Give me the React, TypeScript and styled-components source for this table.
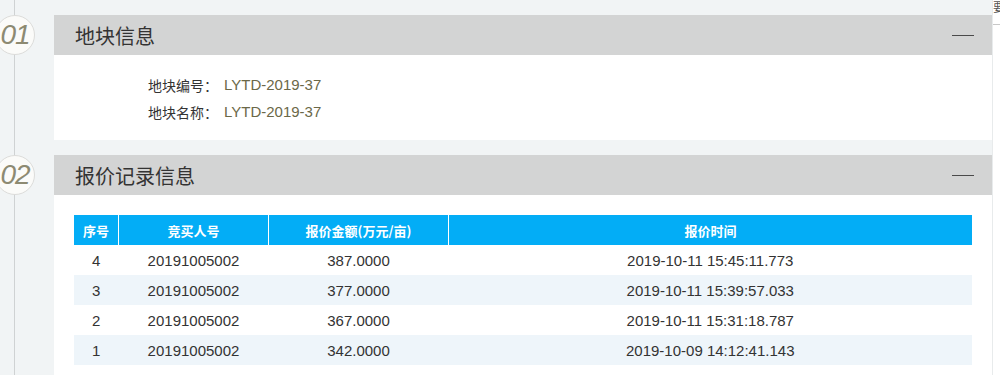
import React from "react"
import styled, { createGlobalStyle } from "styled-components"

const GlobalStyle = createGlobalStyle`
  html, body {
    margin: 0;
    padding: 0;
    background: #f1f4f5;
    font-family: "Liberation Sans", "Noto Sans CJK SC", sans-serif;
    color: #333;
  }
`

const Page = styled.div`
  display: flex;
  width: 1000px;
  height: 375px;
  overflow: hidden;
`

// Timeline line runs behind the step markers
const Main = styled.div`
  position: relative;
  flex: 1;
  padding-top: 15px;
  display: grid;
  grid-gap: 15px;
  align-content: start;

  &::before {
    content: "";
    position: absolute;
    left: 14px;
    top: 0;
    bottom: 0;
    width: 1px;
    background: #cfd2d3;
  }
`

const SideStrip = styled.div`
  width: 7px;
  background: #fff;
  border-left: 1px solid #e8ebec;
  display: flex;
  flex-direction: column;
  overflow: hidden;
`

const SideLabel = styled.div`
  height: 24px;
  border-bottom: 1px solid #c8c8c8;
  font-size: 12px;
  line-height: 16px;
  color: #555;
  white-space: nowrap;
`

const Section = styled.div`
  display: grid;
  grid-template-columns: 54px 1fr;
`

const Step = styled.div`
  position: relative;
  z-index: 1;
  width: 40px;
  height: 40px;
  margin-left: -5px;
  box-sizing: border-box;
  border: 1px solid #dcdcda;
  border-radius: 50%;
  background: #fbfbf9;
  display: flex;
  align-items: center;
  justify-content: center;
  font-family: "Liberation Sans", Arial, sans-serif;
  font-style: italic;
  font-size: 28px;
  color: #8d8a72;
  letter-spacing: -1px;
`

const Panel = styled.div`
  background: #fff;
`

const PanelHeader = styled.div`
  height: 40px;
  background: #d3d4d4;
  display: flex;
  align-items: center;
  justify-content: space-between;
  padding: 0 18px 0 21px;
`

const Title = styled.h2`
  margin: 0;
  font-size: 20px;
  font-weight: normal;
  color: #333;
  font-family: "Noto Sans CJK SC", sans-serif;
`

const Collapse = styled.span`
  width: 22px;
  height: 1px;
  background: #4a4a4a;
`

const InfoBody = styled.div`
  padding: 16px 0 15px 94px;
`

const InfoRow = styled.div`
  display: flex;
  align-items: center;
  height: 27px;
  font-size: 14px;
`

const InfoLabel = styled.span`
  width: 76px;
  color: #333;
  font-family: "Noto Sans CJK SC", sans-serif;
`

const InfoValue = styled.span`
  font-size: 15px;
  color: #6b6848;
`

const TableBody = styled.div`
  padding: 20px 20px 10px;
`

const Table = styled.table`
  width: 100%;
  border-collapse: collapse;
  table-layout: fixed;
`

const Th = styled.th<{ w?: number }>`
  width: ${(p) => (p.w ? `${p.w}px` : "auto")};
  height: 30px;
  padding: 0;
  background: #03adf6;
  color: #fff;
  font-size: 13px;
  font-weight: bold;
  font-family: "Noto Sans CJK SC", sans-serif;
  border-left: 1px solid #fff;

  &:first-child {
    border-left: none;
  }
`

const Tr = styled.tr<{ striped: boolean }>`
  background: ${(p) => (p.striped ? "#eef5fa" : "#fff")};
`

const Td = styled.td`
  height: 30px;
  padding: 0;
  text-align: center;
  font-size: 15px;
  color: #333;
`

const bids = [
  { seq: 4, bidder: "20191005002", price: "387.0000", time: "2019-10-11 15:45:11.773" },
  { seq: 3, bidder: "20191005002", price: "377.0000", time: "2019-10-11 15:39:57.033" },
  { seq: 2, bidder: "20191005002", price: "367.0000", time: "2019-10-11 15:31:18.787" },
  { seq: 1, bidder: "20191005002", price: "342.0000", time: "2019-10-09 14:12:41.143" },
]

export default function App() {
  return (
    <>
      <GlobalStyle />
      <Page>
        <Main>
          <Section>
            <Step>01</Step>
            <Panel>
              <PanelHeader>
                <Title>地块信息</Title>
                <Collapse />
              </PanelHeader>
              <InfoBody>
                <InfoRow>
                  <InfoLabel>地块编号：</InfoLabel>
                  <InfoValue>LYTD-2019-37</InfoValue>
                </InfoRow>
                <InfoRow>
                  <InfoLabel>地块名称：</InfoLabel>
                  <InfoValue>LYTD-2019-37</InfoValue>
                </InfoRow>
              </InfoBody>
            </Panel>
          </Section>
          <Section>
            <Step>02</Step>
            <Panel>
              <PanelHeader>
                <Title>报价记录信息</Title>
                <Collapse />
              </PanelHeader>
              <TableBody>
                <Table>
                  <thead>
                    <tr>
                      <Th w={44}>序号</Th>
                      <Th w={149}>竞买人号</Th>
                      <Th w={179}>报价金额(万元/亩)</Th>
                      <Th>报价时间</Th>
                    </tr>
                  </thead>
                  <tbody>
                    {bids.map((b, i) => (
                      <Tr key={b.seq} striped={i % 2 === 1}>
                        <Td>{b.seq}</Td>
                        <Td>{b.bidder}</Td>
                        <Td>{b.price}</Td>
                        <Td>{b.time}</Td>
                      </Tr>
                    ))}
                  </tbody>
                </Table>
              </TableBody>
            </Panel>
          </Section>
        </Main>
        <SideStrip>
          <SideLabel>要</SideLabel>
        </SideStrip>
      </Page>
    </>
  )
}
